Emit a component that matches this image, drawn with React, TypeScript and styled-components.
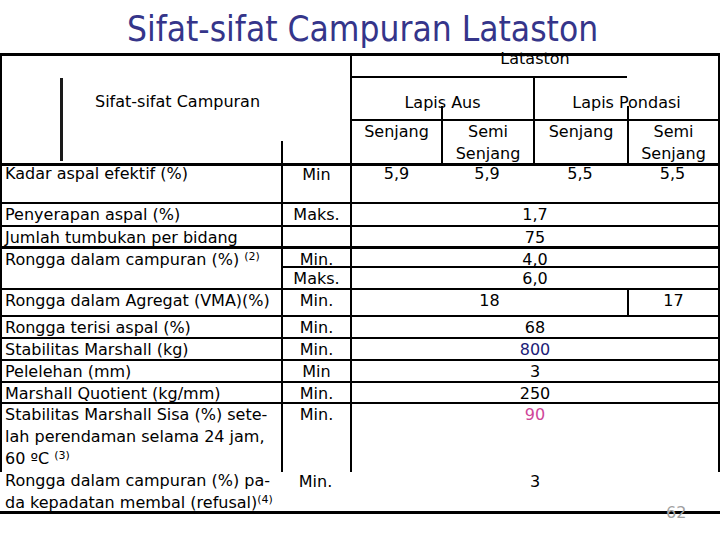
import React from "react";
import styled, { createGlobalStyle } from "styled-components";

const GlobalStyle = createGlobalStyle`
  html, body { margin: 0; padding: 0; background: #ffffff; }
  body {
    width: 720px;
    height: 540px;
    overflow: hidden;
    font-family: "DejaVu Sans", Verdana, sans-serif;
    color: #000000;
  }
`;

const Slide = styled.div`
  position: relative;
  width: 720px;
  height: 540px;
  display: flex;
  flex-direction: column;
`;

const Title = styled.h1`
  margin: 0;
  height: 53px;
  box-sizing: border-box;
  padding: 5px 0 0 5px;
  font-family: "DejaVu Sans Condensed", "DejaVu Sans", sans-serif;
  font-stretch: condensed;
  font-size: 35px;
  line-height: 49px;
  font-weight: normal;
  color: #35358a;
  text-align: center;
  white-space: nowrap;
`;

const Table = styled.div`
  display: grid;
  grid-template-columns: 281px 69px 91px 92px 94px 93px;
  grid-template-rows: 20px 43px 44px 39px 23px 21px 20px 22px 27px 22px 22px 22px 21px 70px 39px;
  border-top: 3px solid #000;
  border-bottom: 3px solid #000;
  font-size: 16px;
  line-height: 21px;
`;

type Edge = { $col: string; $row: string; $top?: number; $left?: number; $right?: number; $shift?: number };

const edges = (p: Edge) => `
  grid-column: ${p.$col};
  grid-row: ${p.$row};
  border-top: ${p.$top ?? 0}px solid #000;
  border-left: ${p.$left ?? 0}px solid #000;
  border-right: ${p.$right ?? 0}px solid #000;
  padding-top: ${p.$shift ?? 0}px;
`;

const HeaderLeft = styled.div<Edge>`
  ${(p) => edges(p)}
  position: relative;
  display: flex;
  align-items: flex-start;
  padding-left: 58px;
  gap: 32px;
`;

const HeaderBar = styled.span`
  display: block;
  width: 3px;
  height: 83px;
  margin-top: 22px;
  background: #1a1a1a;
`;

const HeaderLabel = styled.span`
  margin-top: 35px;
  white-space: nowrap;
`;

const StubLine = styled.span`
  position: absolute;
  left: 279px;
  bottom: 0;
  width: 2px;
  height: 22px;
  background: #000;
`;

const GroupHead = styled.div<Edge & { $partialTop?: number }>`
  ${(p) => edges(p)}
  position: relative;
  text-align: center;
  white-space: nowrap;
  &::before {
    content: "";
    display: ${(p) => (p.$partialTop ? "block" : "none")};
    position: absolute;
    left: 0;
    top: 0;
    width: ${(p) => p.$partialTop ?? 0}px;
    height: 2px;
    background: #000;
  }
`;

const OverTop = styled.span`
  display: block;
  margin-top: -5px;
  line-height: 16px;
`;

const SubHead = styled.div<Edge & { $rise?: boolean }>`
  ${(p) => edges(p)}
  position: relative;
  text-align: center;
  line-height: 22px;
  &::before {
    content: "";
    display: ${(p) => (p.$rise ? "block" : "none")};
    position: absolute;
    left: -2px;
    top: -15px;
    width: 2px;
    height: 13px;
    background: #000;
  }
`;

const Label = styled.div<Edge & { $lh?: number }>`
  ${(p) => edges(p)}
  padding-left: ${(p) => 5 - (p.$left ?? 0)}px;
  line-height: ${(p) => p.$lh ?? 21}px;
  white-space: nowrap;
`;

const Limit = styled.div<Edge>`
  ${(p) => edges(p)}
  text-align: center;
`;

const Value = styled.div<Edge & { $tone?: string }>`
  ${(p) => edges(p)}
  text-align: center;
  color: ${(p) => p.$tone ?? "#000"};
`;

const Lift = styled.span<{ $by: number }>`
  display: block;
  margin-top: ${(p) => -p.$by}px;
`;

const Sup = styled.sup`
  font-size: 11px;
  line-height: 0;
  vertical-align: 5px;
`;

const PageNo = styled.div`
  position: absolute;
  left: 666px;
  top: 503px;
  font-size: 16px;
  line-height: 20px;
  color: #a0a0a0;
`;

export default function App() {
  return (
    <>
      <GlobalStyle />
      <Slide>
        <Title>Sifat-sifat Campuran Lataston</Title>
        <Table>
          <HeaderLeft $col="1 / 3" $row="1 / 4" $left={2}>
            <HeaderBar />
            <HeaderLabel>Sifat-sifat Campuran</HeaderLabel>
            <StubLine />
          </HeaderLeft>
          <GroupHead $col="3 / 7" $row="1" $left={2} $right={2}>
            <OverTop>Lataston</OverTop>
          </GroupHead>
          <GroupHead $col="3 / 5" $row="2" $left={2} $top={2} $shift={14}>
            Lapis Aus
          </GroupHead>
          <GroupHead $col="5 / 7" $row="2" $left={2} $right={2} $shift={16} $partialTop={92}>
            Lapis Pondasi
          </GroupHead>
          <SubHead $col="3" $row="3" $left={2} $top={2}>Senjang</SubHead>
          <SubHead $col="4" $row="3" $left={2} $top={2} $rise>Semi<br />Senjang</SubHead>
          <SubHead $col="5" $row="3" $left={2} $top={2}>Senjang</SubHead>
          <SubHead $col="6" $row="3" $left={2} $top={2} $right={2} $rise>Semi<br />Senjang</SubHead>

          <Label $col="1" $row="4" $left={2} $top={3}><Lift $by={3}>Kadar aspal efektif (%)</Lift></Label>
          <Limit $col="2" $row="4" $left={2} $top={3}><Lift $by={2}>Min</Lift></Limit>
          <Value $col="3" $row="4" $left={2} $top={3}><Lift $by={3}>5,9</Lift></Value>
          <Value $col="4" $row="4" $top={3}><Lift $by={3}>5,9</Lift></Value>
          <Value $col="5" $row="4" $top={3}><Lift $by={3}>5,5</Lift></Value>
          <Value $col="6" $row="4" $top={3} $right={2}><Lift $by={3}>5,5</Lift></Value>

          <Label $col="1" $row="5" $left={2} $top={2}>Penyerapan aspal (%)</Label>
          <Limit $col="2" $row="5" $left={2} $top={2}>Maks.</Limit>
          <Value $col="3 / 7" $row="5" $left={2} $top={2} $right={2}>1,7</Value>

          <Label $col="1" $row="6" $left={2} $top={2}>Jumlah tumbukan per bidang</Label>
          <Limit $col="2" $row="6" $left={2} $top={2} />
          <Value $col="3 / 7" $row="6" $left={2} $top={2} $right={2}>75</Value>

          <Label $col="1" $row="7 / 9" $left={2} $top={3}>Rongga dalam campuran (%) <Sup>(2)</Sup></Label>
          <Limit $col="2" $row="7" $left={2} $top={3}>Min.</Limit>
          <Value $col="3 / 7" $row="7" $left={2} $top={3} $right={2}>4,0</Value>
          <Limit $col="2" $row="8" $left={2} $top={2}>Maks.</Limit>
          <Value $col="3 / 7" $row="8" $left={2} $top={2} $right={2}>6,0</Value>

          <Label $col="1" $row="9" $left={2} $top={2}>Rongga dalam Agregat (VMA)(%)</Label>
          <Limit $col="2" $row="9" $left={2} $top={2}>Min.</Limit>
          <Value $col="3 / 6" $row="9" $left={2} $top={2}>18</Value>
          <Value $col="6" $row="9" $left={2} $top={2} $right={2}>17</Value>

          <Label $col="1" $row="10" $left={2} $top={2}>Rongga terisi aspal (%)</Label>
          <Limit $col="2" $row="10" $left={2} $top={2}>Min.</Limit>
          <Value $col="3 / 7" $row="10" $left={2} $top={2} $right={2}>68</Value>

          <Label $col="1" $row="11" $left={2} $top={2}>Stabilitas Marshall (kg)</Label>
          <Limit $col="2" $row="11" $left={2} $top={2}>Min.</Limit>
          <Value $col="3 / 7" $row="11" $left={2} $top={2} $right={2} $tone="#1c1c78">800</Value>

          <Label $col="1" $row="12" $left={2} $top={2}>Pelelehan (mm)</Label>
          <Limit $col="2" $row="12" $left={2} $top={2}>Min</Limit>
          <Value $col="3 / 7" $row="12" $left={2} $top={2} $right={2}>3</Value>

          <Label $col="1" $row="13" $left={2} $top={2}>Marshall Quotient (kg/mm)</Label>
          <Limit $col="2" $row="13" $left={2} $top={2}>Min.</Limit>
          <Value $col="3 / 7" $row="13" $left={2} $top={2} $right={2}>250</Value>

          <Label $col="1" $row="14" $left={2} $top={2} $lh={22}>
            Stabilitas Marshall Sisa (%) sete-<br />lah perendaman selama 24 jam,<br />60 ºC <Sup>(3)</Sup>
          </Label>
          <Limit $col="2" $row="14" $left={2} $top={2}>Min.</Limit>
          <Value $col="3 / 7" $row="14" $left={2} $top={2} $right={2} $tone="#cf4699">90</Value>

          <Label $col="1" $row="15" $lh={22}>
            <Lift $by={2}>Rongga dalam campuran (%) pa-<br />da kepadatan membal (refusal)<Sup>(4)</Sup></Lift>
          </Label>
          <Limit $col="2" $row="15"><Lift $by={1}>Min.</Lift></Limit>
          <Value $col="3 / 7" $row="15"><Lift $by={1}>3</Lift></Value>
        </Table>
        <PageNo>62</PageNo>
      </Slide>
    </>
  );
}
